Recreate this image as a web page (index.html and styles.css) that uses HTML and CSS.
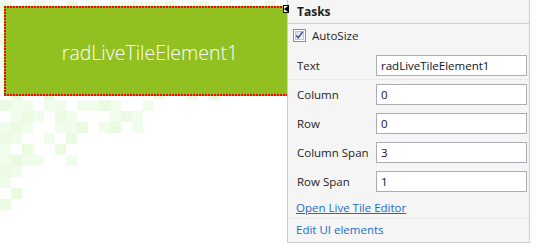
FILE: index.html
```html
<!DOCTYPE html>
<html lang="en">
<head>
    <meta charset="UTF-8">
    <title>Live Tile Designer</title>
    <link rel="stylesheet" href="styles.css">
</head>

<body>
    <div class="canvas">
        <svg class="pattern" id="pattern" width="290" height="220" viewBox="0 0 290 220"></svg>

        <div class="stage">
            <div class="tile">radLiveTileElement1</div>

            <div class="panel">
                <svg class="smart-tag" width="6" height="8" viewBox="0 0 6 8">
                    <rect x="0.5" y="0.5" width="5" height="7" fill="#fff" stroke="#000"/>
                    <path d="M1 4 L5 1 L5 7 Z" fill="#000"/>
                </svg>

                <div class="tasks-head">Tasks</div>

                <label class="autosize">
                    <svg width="13" height="13" viewBox="0 0 13 13">
                        <defs>
                            <linearGradient id="cb" x1="0" y1="0" x2="1" y2="1">
                                <stop offset="0" stop-color="#dcdcdc"/>
                                <stop offset="1" stop-color="#fbfbfb"/>
                            </linearGradient>
                        </defs>
                        <rect x="0.5" y="0.5" width="12" height="12" fill="#fff" stroke="#8e8f8f"/>
                        <rect x="2.5" y="2.5" width="8" height="8" fill="url(#cb)" stroke="#c2c4c8"/>
                        <path d="M3.2 6.4 L5.3 8.8 L9.8 2.6" fill="none" stroke="#3c5aa0" stroke-width="1.6"/>
                    </svg>
                    <span>AutoSize</span>
                </label>

                <div class="field field-first">
                    <span class="field-label">Text</span>
                    <input class="field-input" type="text" value="radLiveTileElement1">
                </div>
                <div class="field">
                    <span class="field-label">Column</span>
                    <input class="field-input" type="text" value="0">
                </div>
                <div class="field">
                    <span class="field-label">Row</span>
                    <input class="field-input" type="text" value="0">
                </div>
                <div class="field">
                    <span class="field-label">Column Span</span>
                    <input class="field-input" type="text" value="3">
                </div>
                <div class="field">
                    <span class="field-label">Row Span</span>
                    <input class="field-input" type="text" value="1">
                </div>

                <a class="task-link editor-link" href="#">Open Live Tile Editor</a>
                <a class="task-link ui-link" href="#">Edit UI elements</a>
            </div>
        </div>
    </div>

    <script>
        // light squares behind the tile, one string per 11px row, '#' = filled cell
        const rows = [
            '#.###.#.#.######.##.#.#.#',
            '#',
            '',
            '#',
            '',
            '#',
            '',
            '#',
            '.#..#.........#..#.#',
            '###.##.####..#',
            '.###.##...###',
            '###..###.##.#',
            '##..#.#',
            '#.#..#',
            '####..#',
            '##',
            '#',
            '.#',
            '#'
        ];

        const svg = document.getElementById('pattern');
        rows.forEach((row, r) => {
            row.split('').forEach((cell, c) => {
                if (cell !== '#') return;
                const rect = document.createElementNS('http://www.w3.org/2000/svg', 'rect');
                rect.setAttribute('x', c * 11);
                rect.setAttribute('y', 1 + r * 11);
                rect.setAttribute('width', 11);
                rect.setAttribute('height', 11);
                rect.setAttribute('fill', (r + c) % 3 === 0 ? '#eafbe2' : '#f1fdec');
                svg.appendChild(rect);
            });
        });
    </script>
</body>
</html>
```

FILE: styles.css
```css
body {
    margin: 0;
    background-color: #fff;
    font-family: "Open Sans", "Liberation Sans", sans-serif;
    font-size: 11.5px;
    color: #1e1e1e;
}

.canvas {
    display: grid;
    width: 539px;
    height: 252px;
    overflow: hidden;
}

.pattern,
.stage {
    grid-area: 1 / 1;
}

.stage {
    display: flex;
    align-items: flex-start;
}

.tile {
    margin: 6px 0 0 4px;
    width: 292px;
    height: 90px;
    flex: none;
    display: flex;
    align-items: center;
    justify-content: center;
    padding-top: 3px;
    box-sizing: border-box;
    color: #fff;
    font-size: 19.5px;
    font-weight: 300;
    background:
        repeating-linear-gradient(90deg, #f00 0 2px, transparent 2px 3px) top left / 100% 2px no-repeat,
        repeating-linear-gradient(90deg, #f00 0 2px, transparent 2px 3px) bottom left / 100% 2px no-repeat,
        repeating-linear-gradient(180deg, #f00 0 2px, transparent 2px 3px) top left / 2px 100% no-repeat,
        #93c021;
}

.panel {
    position: relative;
    flex: none;
    margin: -1px 0 0 -9px;
    width: 243px;
    height: 244px;
    box-sizing: border-box;
    border: 1px solid #cbcbda;
    background-color: #f5f5f5;
}

.smart-tag {
    position: absolute;
    left: -5px;
    top: 5px;
}

.tasks-head {
    height: 23px;
    line-height: 23px;
    padding-left: 9px;
    font-size: 12px;
    font-weight: bold;
    border-bottom: 1px solid #cbcbda;
}

.autosize {
    display: flex;
    align-items: center;
    gap: 6px;
    height: 23px;
    padding: 0 0 0 5px;
    margin-bottom: 4px;
}

.autosize svg {
    display: block;
}

.field {
    display: grid;
    grid-template-columns: 88px 151px;
    align-items: center;
    height: 29px;
}

.field-first {
    height: 28px;
    border-bottom: 1px solid #e9e9ec;
}

.field-label {
    padding-left: 9px;
}

.field-input {
    box-sizing: border-box;
    width: 151px;
    height: 21px;
    margin: 0;
    padding: 0 4px;
    border: 1px solid #abadb3;
    background-color: #fff;
    font-family: inherit;
    font-size: 11.5px;
    color: #10102a;
    outline: none;
}

.task-link {
    display: block;
    padding-left: 8px;
    color: #1a6bc9;
}

.editor-link {
    height: 21px;
    line-height: 21px;
    margin-top: 1px;
    text-decoration: underline;
}

.ui-link {
    height: 22px;
    line-height: 22px;
    border-top: 1px solid #e9e9ec;
    text-decoration: none;
}
```
